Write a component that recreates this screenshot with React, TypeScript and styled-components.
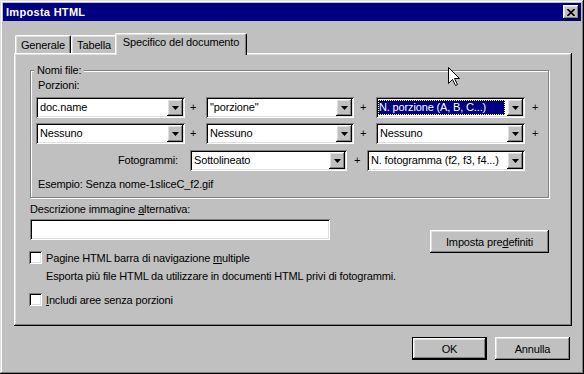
import React from "react";
import styled, { createGlobalStyle, css } from "styled-components";

const GlobalStyle = createGlobalStyle`
  html, body {
    margin: 0;
    padding: 0;
    background: #c0c0c0;
  }
  body {
    font-family: "Liberation Sans", Arial, sans-serif;
    font-size: 11px;
    letter-spacing: -0.15px;
    color: #000;
  }
  * {
    box-sizing: border-box;
  }
`;

const raised = css`
  box-shadow: inset -1px -1px 0 #000, inset 1px 1px 0 #fff,
    inset -2px -2px 0 #808080, inset 2px 2px 0 #dfdfdf;
`;

const sunken = css`
  box-shadow: inset 1px 1px 0 #808080, inset -1px -1px 0 #fff,
    inset 2px 2px 0 #000, inset -2px -2px 0 #dfdfdf;
`;

const Window = styled.div`
  position: relative;
  width: 584px;
  height: 374px;
  padding: 3px;
  background: #c0c0c0;
  display: flex;
  flex-direction: column;
  box-shadow: inset -1px -1px 0 #000, inset 1px 1px 0 #dfdfdf,
    inset -2px -2px 0 #808080, inset 2px 2px 0 #fff;
`;

const TitleBar = styled.div`
  height: 18px;
  background: #000080;
  display: flex;
  align-items: center;
  justify-content: space-between;
  padding: 0 2px 0 3px;
`;

const Title = styled.span`
  color: #fff;
  font-weight: bold;
  font-size: 11px;
  letter-spacing: 0.3px;
`;

const CloseButton = styled.div`
  width: 16px;
  height: 14px;
  background: #c0c0c0;
  display: flex;
  align-items: center;
  justify-content: center;
  ${raised};
`;

const Body = styled.div`
  flex: 1;
  display: flex;
  flex-direction: column;
  padding: 12px 9px 0 11px;
`;

const TabRow = styled.div`
  display: flex;
  align-items: flex-end;
  height: 20px;
  padding-left: 1px;
  position: relative;
  z-index: 2;
`;

const Tab = styled.div<{ $w: number; $active?: boolean }>`
  width: ${(p) => p.$w}px;
  height: ${(p) => (p.$active ? 22 : 18)}px;
  margin: ${(p) => (p.$active ? "0 -2px -2px -2px" : "0")};
  padding-top: ${(p) => (p.$active ? 2 : 3)}px;
  background: #c0c0c0;
  text-align: center;
  line-height: 13px;
  white-space: nowrap;
  position: relative;
  z-index: ${(p) => (p.$active ? 2 : 1)};
  border-top: 1px solid #fff;
  border-left: 1px solid #fff;
  border-right: 1px solid #000;
  border-radius: 2px 2px 0 0;
  box-shadow: inset -1px 0 0 #808080, inset 1px 1px 0 #dfdfdf;
`;

const Pane = styled.div`
  height: 273px;
  padding: 2px;
  display: flex;
  flex-direction: column;
  ${raised};
`;

const Group = styled.div`
  margin: 15px 0 0 14px;
  width: 519px;
  height: 128px;
  border: 1px solid #808080;
  box-shadow: 1px 1px 0 #fff, inset 1px 1px 0 #fff;
  display: flex;
  flex-direction: column;
  padding: 0 0 0 5px;
`;

const Legend = styled.div`
  align-self: flex-start;
  margin: -7px 0 0 -2px;
  padding: 0 3px;
  background: #c0c0c0;
  line-height: 13px;
`;

const Label = styled.div<{ $mt?: number; $ml?: number }>`
  line-height: 13px;
  margin-top: ${(p) => p.$mt ?? 0}px;
  margin-left: ${(p) => p.$ml ?? 0}px;
  white-space: nowrap;
`;

const ComboRow = styled.div<{ $mt: number }>`
  display: flex;
  align-items: center;
  margin-top: ${(p) => p.$mt}px;
  height: 21px;
`;

const ComboBox = styled.div<{ $w: number }>`
  width: ${(p) => p.$w}px;
  height: 21px;
  padding: 2px;
  background: #fff;
  display: flex;
  ${sunken};
`;

const ComboText = styled.div<{ $focused?: boolean }>`
  flex: 1;
  white-space: nowrap;
  overflow: hidden;
  ${(p) =>
    p.$focused
      ? css`
          margin: 1px 2px 1px 0;
          padding-left: 1px;
          line-height: 15px;
          background: #000080;
          color: #fff;
          outline: 1px dotted #ffff90;
          outline-offset: -1px;
        `
      : css`
          padding-left: 2px;
          line-height: 17px;
        `}
`;

const ArrowButton = styled.div`
  width: 16px;
  height: 17px;
  background: #c0c0c0;
  display: flex;
  align-items: center;
  justify-content: center;
  ${raised};
`;

const Plus = styled.div<{ $w: number; $pl: number }>`
  width: ${(p) => p.$w}px;
  padding-left: ${(p) => p.$pl}px;
  line-height: 13px;
`;

const RowLabel = styled.div`
  width: 154px;
  padding-right: 12px;
  text-align: right;
  line-height: 13px;
`;

const Lower = styled.div`
  display: flex;
  margin-left: 14px;
`;

const LeftCol = styled.div`
  width: 300px;
  display: flex;
  flex-direction: column;
`;

const TextField = styled.div`
  width: 300px;
  height: 21px;
  margin-top: 3px;
  background: #fff;
  ${sunken};
`;

const CheckRow = styled.div<{ $mt: number }>`
  display: flex;
  align-items: center;
  height: 13px;
  margin-top: ${(p) => p.$mt}px;
  margin-left: -1px;
  white-space: nowrap;
`;

const CheckBox = styled.div`
  width: 13px;
  height: 13px;
  margin-right: 4px;
  background: #fff;
  ${sunken};
`;

const Note = styled.div`
  margin: 6px 0 0 16px;
  line-height: 13px;
  white-space: nowrap;
`;

const Button = styled.div<{ $w: number; $default?: boolean }>`
  width: ${(p) => p.$w}px;
  height: 23px;
  background: #c0c0c0;
  display: flex;
  align-items: center;
  justify-content: center;
  white-space: nowrap;
  ${(p) =>
    p.$default
      ? css`
          box-shadow: inset 0 0 0 1px #000, inset -2px -2px 0 #000,
            inset 2px 2px 0 #fff, inset -3px -3px 0 #808080,
            inset 3px 3px 0 #dfdfdf;
        `
      : raised};
`;

const SideButton = styled(Button)`
  margin: 32px 0 0 100px;
`;

const Footer = styled.div`
  display: flex;
  justify-content: flex-end;
  gap: 8px;
  margin-top: 11px;
  padding-right: 2px;
`;

const Cursor = styled.svg`
  position: absolute;
  left: 448px;
  top: 67px;
  z-index: 5;
`;

const Arrow = () => (
  <ArrowButton>
    <svg width="7" height="4" viewBox="0 0 7 4">
      <polygon points="0,0 7,0 3.5,4" fill="#000" />
    </svg>
  </ArrowButton>
);

const Combo = ({ w, value, focused }: { w: number; value: string; focused?: boolean }) => (
  <ComboBox $w={w}>
    <ComboText $focused={focused}>{value}</ComboText>
    <Arrow />
  </ComboBox>
);

export default function App() {
  return (
    <>
      <GlobalStyle />
      <Window>
        <TitleBar>
          <Title>Imposta HTML</Title>
          <CloseButton>
            <svg width="8" height="7" viewBox="0 0 8 7">
              <path d="M0.5 0 L7.5 7 M7.5 0 L0.5 7" stroke="#000" strokeWidth="1.6" />
            </svg>
          </CloseButton>
        </TitleBar>
        <Body>
          <TabRow>
            <Tab $w={56}>Generale</Tab>
            <Tab $w={46}>Tabella</Tab>
            <Tab $w={132} $active>
              Specifico del documento
            </Tab>
          </TabRow>
          <Pane>
            <Group>
              <Legend>Nomi file:</Legend>
              <Label $mt={2} $ml={2}>
                Porzioni:
              </Label>
              <ComboRow $mt={5}>
                <Combo w={149} value="doc.name" />
                <Plus $w={21} $pl={5}>+</Plus>
                <Combo w={148} value={'"porzione"'} />
                <Plus $w={22} $pl={6}>+</Plus>
                <Combo w={149} value="N. porzione (A, B, C...)" focused />
                <Plus $w={20} $pl={7}>+</Plus>
              </ComboRow>
              <ComboRow $mt={5}>
                <Combo w={149} value="Nessuno" />
                <Plus $w={21} $pl={5}>+</Plus>
                <Combo w={148} value="Nessuno" />
                <Plus $w={22} $pl={6}>+</Plus>
                <Combo w={149} value="Nessuno" />
                <Plus $w={20} $pl={7}>+</Plus>
              </ComboRow>
              <ComboRow $mt={6}>
                <RowLabel>Fotogrammi:</RowLabel>
                <Combo w={157} value="Sottolineato" />
                <Plus $w={20} $pl={7}>+</Plus>
                <Combo w={158} value="N. fotogramma (f2, f3, f4...)" />
              </ComboRow>
              <Label $mt={7} $ml={2}>
                Esempio: Senza nome-1sliceC_f2.gif
              </Label>
            </Group>
            <Lower>
              <LeftCol>
                <Label $mt={5}>
                  Descrizione immagine <u>a</u>lternativa:
                </Label>
                <TextField />
                <CheckRow $mt={11}>
                  <CheckBox />
                  <span>
                    Pagine HTML barra di navigazione <u>m</u>ultiple
                  </span>
                </CheckRow>
                <Note>Esporta più file HTML da utilizzare in documenti HTML privi di fotogrammi.</Note>
                <CheckRow $mt={10}>
                  <CheckBox />
                  <span>
                    <u>I</u>ncludi aree senza porzioni
                  </span>
                </CheckRow>
              </LeftCol>
              <SideButton $w={119}>
                <span>
                  Imposta pre<u>d</u>efiniti
                </span>
              </SideButton>
            </Lower>
          </Pane>
          <Footer>
            <Button $w={75} $default>
              OK
            </Button>
            <Button $w={75}>Annulla</Button>
          </Footer>
        </Body>
        <Cursor width="13" height="20" viewBox="0 0 13 20">
          <path
            d="M0.5 0.5 L0.5 16.5 L4.5 12.5 L7.5 18.5 L9.5 17.5 L6.5 11.5 L11.5 11.5 Z"
            fill="#fff"
            stroke="#000"
            strokeWidth="1"
          />
        </Cursor>
      </Window>
    </>
  );
}
